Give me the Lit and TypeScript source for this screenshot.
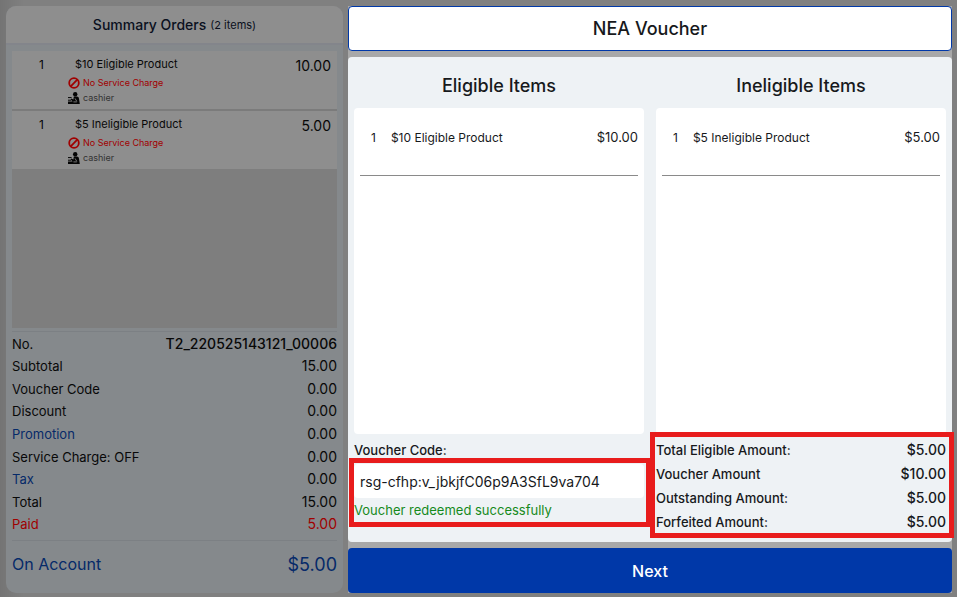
import { LitElement, html, css, svg } from "lit";
import { customElement } from "lit/decorators.js";
import { classMap } from "lit/directives/class-map.js";

interface Line {
  label: string;
  value: string;
  kind?: "link" | "paid" | "number";
}

const orders = [
  { qty: 1, name: "$10 Eligible Product", price: "10.00" },
  { qty: 1, name: "$5 Ineligible Product", price: "5.00" },
];

const lines: Line[] = [
  { label: "No.", value: "T2_220525143121_00006", kind: "number" },
  { label: "Subtotal", value: "15.00" },
  { label: "Voucher Code", value: "0.00" },
  { label: "Discount", value: "0.00" },
  { label: "Promotion", value: "0.00", kind: "link" },
  { label: "Service Charge: OFF", value: "0.00" },
  { label: "Tax", value: "0.00", kind: "link" },
  { label: "Total", value: "15.00" },
  { label: "Paid", value: "5.00", kind: "paid" },
];

const amounts: Line[] = [
  { label: "Total Eligible Amount:", value: "$5.00" },
  { label: "Voucher Amount", value: "$10.00" },
  { label: "Outstanding Amount:", value: "$5.00" },
  { label: "Forfeited Amount:", value: "$5.00" },
];

const banIcon = html`<svg class="icon" viewBox="0 0 12 12" aria-hidden="true">
  ${svg`<circle cx="6" cy="6" r="4.8" fill="none" stroke="currentColor" stroke-width="1.8"/>
  <path d="M2.7 9.3 9.3 2.7" stroke="currentColor" stroke-width="1.8"/>`}
</svg>`;

const cashierIcon = html`<svg class="icon" viewBox="0 0 12 12" aria-hidden="true">
  ${svg`<circle cx="7.2" cy="2.2" r="2.2" fill="currentColor"/>
  <path d="M5.8 4.6h3c1.3 0 2 .9 2.2 2.2l.8 5.2H0V9.6h4.6L2.6 7.4l.8-.9 2 .9z" fill="currentColor"/>
  <path d="M7 6.4l1.8 3M5.4 9.9h3.4" stroke="#8e8e8e" stroke-width=".8"/>
  <path d="M0 5.6h3.6M0 8.2h3" stroke="currentColor" stroke-width="1"/>`}
</svg>`;

@customElement("order-summary")
class OrderSummary extends LitElement {
  static styles = css`
    :host {
      display: flex;
      flex-direction: column;
      overflow: hidden;
      border-radius: 10px;
      background: #85898c;
      color: #080808;
      font-size: 14px;
    }
    .head {
      display: flex;
      align-items: center;
      justify-content: center;
      gap: 4px;
      height: 37px;
      background: #8e8e8e;
      border-bottom: 2px solid #83858b;
      color: #0a1020;
    }
    .title {
      margin: 0;
      font-size: 14px;
      font-weight: 500;
    }
    .count {
      font-size: 11px;
    }
    .orders {
      flex: 1;
      margin: 6px 6px 0;
      padding: 0;
      list-style: none;
      background: #7e7e7e;
    }
    .order {
      display: grid;
      grid-template-columns: 56px 1fr auto;
      box-sizing: border-box;
      height: 60px;
      padding: 5px 6px 0 0;
      background: #8e8e8e;
      border-bottom: 2px solid #7b7b7b;
    }
    .order:last-child {
      height: 58px;
      border-bottom: 0;
    }
    .qty {
      padding-left: 27px;
      font-size: 12px;
      line-height: 18px;
    }
    .name {
      padding-left: 7px;
      font-size: 11px;
      line-height: 16px;
    }
    .note {
      display: flex;
      align-items: center;
      gap: 3px;
      font-size: 9px;
      line-height: 15px;
      color: #333;
    }
    .note.ban {
      margin-top: 3px;
      color: #a00000;
    }
    .icon {
      width: 12px;
      height: 12px;
    }
    .cashier .icon {
      color: #050505;
    }
    .price {
      font-size: 14px;
      line-height: 20px;
    }
    .lines {
      display: grid;
      grid-auto-rows: 1fr;
      align-items: center;
      min-height: 203px;
      margin: 3px 6px 0;
      padding-bottom: 5px;
      border-top: 1px solid #7c8084;
      border-bottom: 1px solid #7c8084;
    }
    .line {
      display: flex;
      align-items: baseline;
      justify-content: space-between;
    }
    .label {
      font-size: 13px;
    }
    .value {
      margin: 0;
    }
    .number .value {
      font-weight: 500;
    }
    .link {
      color: #062a69;
      text-decoration: none;
    }
    .paid {
      color: #a00000;
    }
    .due {
      display: flex;
      align-items: center;
      justify-content: space-between;
      height: 46px;
      padding: 0 6px 6px;
      color: #062a69;
      font-size: 18px;
    }
    .account {
      font-size: 16px;
    }
  `;

  render() {
    return html`
      <header class="head">
        <h2 class="title">Summary Orders</h2>
        <span class="count">(2 items)</span>
      </header>
      <ul class="orders">
        ${orders.map(
          (o) => html`<li class="order">
            <span class="qty">${o.qty}</span>
            <div>
              <div class="name">${o.name}</div>
              <div class="note ban">${banIcon}No Service Charge</div>
              <div class="note cashier">${cashierIcon}cashier</div>
            </div>
            <span class="price">${o.price}</span>
          </li>`
        )}
      </ul>
      <dl class="lines">
        ${lines.map(
          (l) => html`<div
            class=${classMap({ line: true, paid: l.kind === "paid", number: l.kind === "number" })}
          >
            <dt class="label">
              ${l.kind === "link" ? html`<a class="link" href="#">${l.label}</a>` : l.label}
            </dt>
            <dd class="value">${l.value}</dd>
          </div>`
        )}
      </dl>
      <footer class="due">
        <span class="account">On Account</span>
        <span>$5.00</span>
      </footer>
    `;
  }
}

@customElement("item-column")
class ItemColumn extends LitElement {
  static properties = {
    heading: { type: String },
    name: { type: String },
    price: { type: String },
  };
  declare heading: string;
  declare name: string;
  declare price: string;

  static styles = css`
    :host {
      display: flex;
      flex-direction: column;
    }
    .heading {
      margin: 0;
      font-size: 18px;
      font-weight: 500;
      line-height: 45px;
      text-align: center;
    }
    .items {
      flex: 1;
      margin: 0;
      padding: 0 6px;
      list-style: none;
      background: #fff;
      border-radius: 4px;
    }
    .item {
      display: flex;
      gap: 15px;
      padding: 20px 0 28px 11px;
      border-bottom: 1px solid #8a8a8a;
      font-size: 12px;
      line-height: 19px;
    }
    .name {
      flex: 1;
    }
    .price {
      font-size: 13px;
    }
  `;

  render() {
    return html`
      <h2 class="heading">${this.heading}</h2>
      <ul class="items">
        <li class="item">
          <span>1</span>
          <span class="name">${this.name}</span>
          <span class="price">${this.price}</span>
        </li>
      </ul>
    `;
  }
}

@customElement("voucher-dialog")
class VoucherDialog extends LitElement {
  static styles = css`
    :host {
      display: flex;
      flex-direction: column;
      gap: 6px;
      background: #a8a8a8;
      color: #17191c;
    }
    .title {
      box-sizing: border-box;
      height: 45px;
      margin: 0;
      border: 1px solid #0038a8;
      border-radius: 4px;
      background: #fff;
      font-size: 18px;
      font-weight: 500;
      line-height: 43px;
      text-align: center;
    }
    .panel {
      flex: 1;
      display: grid;
      grid-template-columns: 1fr 1fr;
      grid-template-rows: 1fr auto;
      column-gap: 12px;
      padding: 6px;
      border-radius: 4px;
      background: #eef2f5;
    }
    .voucher,
    .amounts {
      margin: 0;
      padding: 4px 0 2px;
      font-size: 13px;
      line-height: 24px;
    }
    .label {
      display: block;
      font-weight: 500;
    }
    .marked {
      position: relative;
    }
    .marked::after {
      content: "";
      position: absolute;
      border: 5px solid #e81c1c;
      pointer-events: none;
    }
    .code {
      padding-top: 2px;
    }
    .code::after {
      inset: -4px -7px -5px -5px;
    }
    .amounts::after {
      inset: -2px -8px -2px -6px;
    }
    .input {
      display: block;
      box-sizing: border-box;
      width: 100%;
      height: 34px;
      padding: 0 6px;
      border: 0;
      border-radius: 4px;
      outline: 0;
      background: #fff;
      color: inherit;
      font: inherit;
      font-size: 14px;
    }
    .status {
      display: block;
      color: #168a1c;
    }
    .amount {
      display: flex;
      justify-content: space-between;
      height: 24px;
      font-weight: 500;
    }
    .amount-value {
      margin: 0;
      font-size: 14px;
    }
    .next {
      height: 45px;
      border: 0;
      border-radius: 4px;
      background: #0038a8;
      color: #fff;
      font: inherit;
      font-size: 16px;
      font-weight: 500;
    }
  `;

  render() {
    return html`
      <h1 class="title">NEA Voucher</h1>
      <section class="panel">
        <item-column heading="Eligible Items" name="$10 Eligible Product" price="$10.00"></item-column>
        <item-column heading="Ineligible Items" name="$5 Ineligible Product" price="$5.00"></item-column>
        <div class="voucher">
          <label class="label" for="code">Voucher Code:</label>
          <div class="code marked">
            <input class="input" id="code" type="text" .value=${"rsg-cfhp:v_jbkjfC06p9A3SfL9va704"} />
            <output class="status" for="code">Voucher redeemed successfully</output>
          </div>
        </div>
        <dl class="amounts marked">
          ${amounts.map(
            (a) => html`<div class="amount">
              <dt>${a.label}</dt>
              <dd class="amount-value">${a.value}</dd>
            </div>`
          )}
        </dl>
      </section>
      <button class="next" type="button">Next</button>
    `;
  }
}

@customElement("app-root")
class AppRoot extends LitElement {
  static styles = css`
    :host {
      display: grid;
      grid-template-columns: 337fr 604fr;
      gap: 5px;
      box-sizing: border-box;
      min-height: 100vh;
      padding: 6px 5px 4px 6px;
      background: linear-gradient(90deg, #747474, #808080 24px);
      font-family: Inter, "Liberation Sans", sans-serif;
    }
  `;

  render() {
    return html`<order-summary></order-summary><voucher-dialog></voucher-dialog>`;
  }
}
